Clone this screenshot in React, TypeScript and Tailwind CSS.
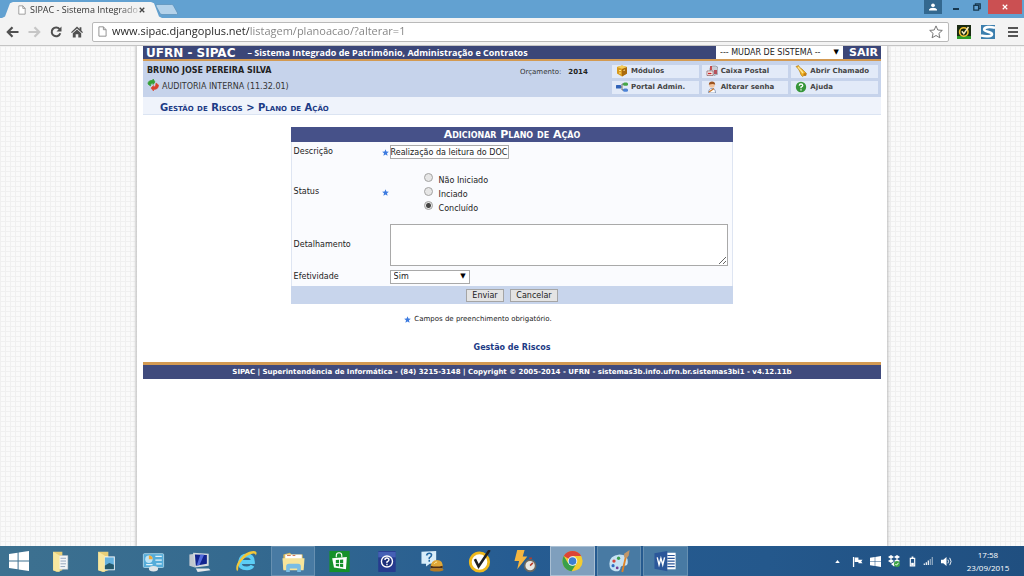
import type { ReactNode } from "react";

const VERDANA = "font-['DejaVu_Sans',sans-serif]";
const SEGOE = "font-['Open_Sans',sans-serif]";

function PageIcon({ className }: { className: string }) {
  return (
    <svg viewBox="0 0 10 12" className={className} fill="#fff" stroke="#8a8a8a" strokeWidth="1">
      <path d="M1 .8h5L9 4v7.2H1z" />
      <path d="M6 .8V4h3" fill="none" />
    </svg>
  );
}

function Star() {
  return (
    <svg viewBox="0 0 10 10" className="size-[7px] shrink-0" role="img" aria-label="obrigatório">
      <path d="M5 .3 6.3 3.5 9.8 3.8 7.1 6.1 8 9.6 5 7.7 2 9.6 2.9 6.1.2 3.8 3.7 3.5z" fill="#3d7be0" />
    </svg>
  );
}

function WindowsLogo({ className }: { className: string }) {
  return (
    <svg viewBox="0 0 20 20" className={className} fill="#fff">
      <path d="M0 3 8.6 1.8V9.5H0zM9.6 1.6 20 0v9.5H9.6zM0 10.5h8.6v7.7L0 17zM9.6 10.5H20V20L9.6 18.4z" />
    </svg>
  );
}

function ChromeBar() {
  return (
    <header className={`${SEGOE} shrink-0`}>
      <div className="flex h-[18px] items-end bg-[#62a1d1]">
        <div className="ml-[2px] flex h-4 w-[160px] items-center justify-between bg-[#f3f3f3] pl-4 pr-[17px] [clip-path:polygon(0_100%,3px_90%,8px_8%,11px_0,149px_0,152px_8%,157px_90%,100%_100%)]">
          <span className="flex items-center gap-1">
            <PageIcon className="h-[10px] w-2 shrink-0" />
            <span className="whitespace-nowrap text-[9px] leading-4 text-[#333] [mask-image:linear-gradient(90deg,#000_82%,rgb(0_0_0/0.25))]">
              SIPAC - Sistema Integrado
            </span>
          </span>
          <button aria-label="Fechar guia" className="shrink-0">
            <svg viewBox="0 0 8 8" className="size-[6px]" stroke="#444" strokeWidth="1.8">
              <path d="M1 1l6 6M7 1 1 7" />
            </svg>
          </button>
        </div>
        <button aria-label="Nova guia" className="-ml-[7px] mb-[3px]">
          <svg viewBox="0 0 24 11" className="h-[11px] w-6">
            <path d="M2 .5h14.500q1.500 0 2 1.200l4 7.300q.500 1.500-1 1.500H7q-1.500 0-2-1.200L1 2Q.500.500 2 .5z" fill="#b4d2ea" stroke="#5a8fb8" strokeWidth=".7" />
          </svg>
        </button>
        <div className="ml-auto flex h-full items-start">
          <button aria-label="Usuário" className="grid h-[14px] w-[18px] place-items-center bg-[#33688f]">
            <svg viewBox="0 0 10 10" className="size-2" fill="#fff">
              <circle cx="5" cy="2.8" r="2.3" />
              <path d="M0 9.5V8q1-2 5-2t5 2v1.5z" />
            </svg>
          </button>
          <button aria-label="Minimizar" className="grid h-[14px] w-7 place-items-center pt-1">
            <span className="h-[2px] w-[6px] bg-[#17384f]" />
          </button>
          <button aria-label="Restaurar" className="grid h-[14px] w-[14px] place-items-center">
            <svg viewBox="0 0 10 10" className="size-2" fill="none" stroke="#17384f" strokeWidth="1.6">
              <path d="M3 3V1h6v6H7M1 3h6v6H1z" />
            </svg>
          </button>
          <button aria-label="Fechar" className="ml-1 grid h-[14px] w-[34px] place-items-center bg-[#cb5052]">
            <svg viewBox="0 0 8 8" className="size-[6px]" stroke="#fff" strokeWidth="1.5">
              <path d="M1 1l6 6M7 1 1 7" />
            </svg>
          </button>
          <span className="w-[2px]" />
        </div>
      </div>
      <div className="flex h-7 items-center border-b border-[#c4c4c4] bg-[#f3f3f3] pl-[6px]">
        <div className="flex w-[86px] items-center gap-[9px]">
          <button aria-label="Voltar">
            <svg viewBox="0 0 13 12" className="h-3 w-[13px]" fill="none" stroke="#505050" strokeWidth="2.2">
              <path d="M12.5 6H2M6.5 1.2 1.8 6l4.7 4.8" />
            </svg>
          </button>
          <button aria-label="Avançar">
            <svg viewBox="0 0 13 12" className="h-3 w-[13px]" fill="none" stroke="#c6c6c6" strokeWidth="2.2">
              <path d="M.5 6H11M6.5 1.2 11.2 6l-4.7 4.8" />
            </svg>
          </button>
          <button aria-label="Recarregar">
            <svg viewBox="0 0 12 12" className="h-3 w-3">
              <path d="M9.6 3.2A4.4 4.4 0 1 0 10.300 7.300" fill="none" stroke="#505050" strokeWidth="2" />
              <path d="M11.500.500v5h-5z" fill="#505050" />
            </svg>
          </button>
          <button aria-label="Página inicial">
            <svg viewBox="0 0 12 12" className="h-3 w-3" fill="#505050">
              <path d="M6 .6 8.600 3V1.200h1.800v3.400L12 6.200l-.9.900L6 2.400.900 7.100 0 6.200z" />
              <path d="M1.800 7.300 6 3.500l4.200 3.800v4.200H7.300V8.200H4.700v3.300H1.800z" />
            </svg>
          </button>
        </div>
        <div className="flex h-5 min-w-0 flex-1 items-center gap-[5px] rounded-[2px] border border-[#b9b9b9] bg-white px-[5px]">
          <PageIcon className="h-[11px] w-[9px] shrink-0" />
          <input
            aria-label="Endereço"
            defaultValue="www.sipac.djangoplus.net/listagem/planoacao/?alterar=1"
            className="h-4 min-w-0 flex-1 bg-[linear-gradient(90deg,#222_137px,#808080_137px)] bg-clip-text text-[11px] text-transparent caret-black outline-none"
          />
          <button aria-label="Favoritos" className="shrink-0">
            <svg viewBox="0 0 14 14" className="size-[14px]" fill="#fff" stroke="#777">
              <path d="M7 .9 8.800 5l4.500.4-3.400 3 1 4.400L7 10.500l-3.900 2.300 1-4.400-3.400-3L5.200 5z" />
            </svg>
          </button>
        </div>
        <div className="flex items-center gap-[10px] pl-2 pr-[3px]">
          <button aria-label="Norton">
            <svg viewBox="0 0 14 14" className="size-[14px]">
              <path d="M0 0h14v14H0z" fill="#1a2a12" />
              <path d="M0 11h14v3H0z" fill="#2c9a28" />
              <circle cx="6.800" cy="7" r="4.200" fill="none" stroke="#f3c22e" strokeWidth="1.6" />
              <path d="m4.800 6.300 2 2.400L11.500 2" fill="none" stroke="#f7ecc0" strokeWidth="1.500" />
            </svg>
          </button>
          <button aria-label="Extensão S">
            <svg viewBox="0 0 14 14" className="size-[14px]">
              <path d="M0 0h14v14H0z" fill="#3c7fae" />
              <path d="M14 2.800C9 1.500 3 1.800 3.200 4.600c.3 2.400 7.800 1.800 7.800 4.600 0 2.300-6 2.600-11 1.300" fill="none" stroke="#fff" strokeWidth="2.600" />
            </svg>
          </button>
          <button aria-label="Menu" className="mx-[3px]">
            <svg viewBox="0 0 10 10" className="size-[10px]" fill="#555">
              <path d="M0 0h10v2H0zM0 4h10v2H0zM0 8h10v2H0z" />
            </svg>
          </button>
        </div>
      </div>
    </header>
  );
}

const menu: { label: string; icon: ReactNode }[] = [
  {
    label: "Módulos",
    icon: (
      <>
        <path d="M1 2 6 .6 11 2v6.500L6 11.500 1 8.500z" fill="#d89a1d" />
        <path d="M6 4 11 2v6.500l-5 3z" fill="#a96a0d" />
        <path d="M1 2 6 .6 11 2 6 3.800z" fill="#f4cd5a" />
        <path d="M3 5.500h2M3 8h2M7.500 5.500 9 5" stroke="#ffe48a" />
      </>
    ),
  },
  {
    label: "Caixa Postal",
    icon: (
      <>
        <path d="M4 6V3.500Q4 1 7 1h2.500Q12 1.200 12 4v5l-4 1.500z" fill="#c8cdd4" stroke="#7a828c" strokeWidth=".6" />
        <path d="M1 6h6v4.500H1z" fill="#fff" stroke="#8a5a5a" strokeWidth=".7" />
        <path d="M2 8.500h3.500M5 1v4" stroke="#cc2a2a" strokeWidth="1.500" />
        <path d="M8 5h3v4H8z" fill="#b5525c" />
      </>
    ),
  },
  {
    label: "Abrir Chamado",
    icon: (
      <>
        <path d="M1 1.500 3.500.5q1 2.500 3.500 3.500l4.500 4.500-4 3Q5.500 10 5 7 4 4 1 1.500z" fill="#f0b325" stroke="#a8720c" strokeWidth=".6" />
        <path d="m3 2 5 6" stroke="#ffe795" strokeWidth="1.300" />
        <circle cx="10" cy="9.500" r="1.500" fill="#c47b10" />
      </>
    ),
  },
  {
    label: "Portal Admin.",
    icon: (
      <>
        <path d="M4 6h2V3h2M6 6v3h2" fill="none" stroke="#555" strokeWidth=".8" />
        <rect x="0" y="4" width="5" height="3.500" rx=".5" fill="#2f62b8" />
        <rect x="7" y="1.500" width="5" height="3.300" rx="1.500" fill="#45a648" />
        <rect x="7" y="7.500" width="5" height="3.300" rx="1.500" fill="#4d83d6" />
      </>
    ),
  },
  {
    label: "Alterar senha",
    icon: (
      <>
        <path d="M2.500 12q0-4.500 3.500-4.500T9.500 12z" fill="#fff" stroke="#6b7fa8" strokeWidth=".7" />
        <circle cx="6" cy="4" r="2.800" fill="#f3c299" />
        <path d="M2.800 3.800Q3 .5 6 .5t3.200 3.300Q7 2 2.800 3.800z" fill="#9b5420" />
        <path d="m3 11 5-3.500" stroke="#cc7426" strokeWidth="1.200" />
      </>
    ),
  },
  {
    label: "Ajuda",
    icon: (
      <>
        <circle cx="6" cy="6" r="5.200" fill="#36963a" />
        <path d="M4.200 4.600Q4.400 3 6 3t1.800 1.500Q7.800 5.500 6 6.200v1.100M6 8.200v1.300" fill="none" stroke="#fff" strokeWidth="1.300" />
      </>
    ),
  },
];

function SystemHeader() {
  return (
    <div>
      <div className="flex h-[15px] items-center border-b-2 border-[#d39a52] bg-[#3b4678] text-white">
        <strong className="pl-[3px] text-[12px] leading-3">UFRN - SIPAC</strong>
        <span className="ml-3 font-['Open_Sans',sans-serif] text-[9px] font-bold leading-3">
          – Sistema Integrado de Patrimônio, Administração e Contratos
        </span>
        <div className="relative ml-auto h-[13px] w-[127px]">
          <select
            aria-label="Mudar de sistema"
            className="block h-full w-full appearance-none bg-white pl-1 text-[8px] leading-3 text-[#222]"
          >
            <option>--- MUDAR DE SISTEMA --</option>
          </select>
          <span className="pointer-events-none absolute right-1 top-0 text-[7px] leading-3 text-black">▼</span>
        </div>
        <a href="#sair" className="w-[38px] pl-[6px] text-[11px] font-bold leading-3">
          SAIR
        </a>
      </div>
      <div className="flex h-9 bg-[#c6d3eb] text-[8px] text-[#333]">
        <div className="flex-1 pl-1">
          <div className="pt-1 font-bold leading-3 text-[#222]">BRUNO JOSE PEREIRA SILVA</div>
          <div className="flex items-center gap-[3px] pt-[2px] leading-4">
            <svg viewBox="0 0 12 12" className="mb-1 size-3">
              <path d="M1 5q0-4 5-3.500V0l2 3-2 2.500V4Q3.500 3.500 3.500 7z" fill="#35a035" stroke="#35a035" strokeWidth=".8" />
              <path d="M11.500 6q0 4.500-5 4.500V12l-2.500-3L6.500 6.500V8Q9 8 9 4z" fill="#d9412e" stroke="#d9412e" strokeWidth=".6" />
            </svg>
            AUDITORIA INTERNA (11.32.01)
          </div>
        </div>
        <div className="flex w-[92px] items-start gap-[7px] pt-[5px] text-[7px] leading-3">
          <span>Orçamento:</span>
          <strong className="text-[#222]">2014</strong>
        </div>
        <nav className="grid w-[269px] grid-cols-3 content-center gap-[3px] pr-[3px]">
          {menu.map((item) => (
            <a
              key={item.label}
              href="#menu"
              className="flex h-[13px] items-center gap-[3px] whitespace-nowrap bg-[#e2eaf8] pl-1 text-[7px] font-bold leading-3 text-[#444]"
            >
              <svg viewBox="0 0 12 12" className="size-3 shrink-0">
                {item.icon}
              </svg>
              {item.label}
            </a>
          ))}
        </nav>
      </div>
      <h2 className="h-[18px] border-b border-[#dbe4f2] bg-[#eff3fb] pl-[17px] text-[10px] font-bold leading-[22px] text-[#1c3a85] [font-variant:small-caps]">
        Gestão de Riscos &gt; Plano de Ação
      </h2>
    </div>
  );
}

function PlanForm() {
  return (
    <form
      className="mx-auto mt-3 w-3/5 border-x border-[#dee5f2] bg-[#fafbfe] text-[8px] text-[#222]"
      onSubmit={(e) => e.preventDefault()}
    >
      <h1 className="-mx-px bg-[#465189] text-center text-[11px] font-bold leading-[15px] text-white [font-variant:small-caps]">
        Adicionar Plano de Ação
      </h1>
      <div className="grid grid-cols-[88px_8px_1fr] items-center pl-[2px] pr-1">
        <label htmlFor="descricao">Descrição</label>
        <Star />
        <div className="flex h-5 items-center">
          <input
            id="descricao"
            defaultValue="Realização da leitura do DOC"
            className="h-[14px] w-[119px] border border-[#a9a9a9] bg-white text-[8px] outline-none"
          />
        </div>

        <span id="status">Status</span>
        <Star />
        <div role="radiogroup" aria-labelledby="status" className="mb-[6px] mt-3 pl-[34px]">
          {["Não Iniciado", "Inciado", "Concluído"].map((s) => (
            <label key={s} className="flex h-[14px] items-center gap-[6px]">
              <input
                type="radio"
                name="status"
                defaultChecked={s === "Concluído"}
                className="mb-[7px] size-[9px] shrink-0 appearance-none rounded-full border border-[#a3a3a3] bg-[#e6e6e6] checked:bg-[radial-gradient(circle,#444_2px,#e6e6e6_3px)]"
              />
              {s}
            </label>
          ))}
        </div>

        <label htmlFor="detalhamento" className="col-span-2">
          Detalhamento
        </label>
        <textarea
          id="detalhamento"
          className="my-[2px] block h-[42px] w-full resize border border-[#a9a9a9] bg-white text-[8px] outline-none"
        />

        <label htmlFor="efetividade" className="col-span-2">
          Efetividade
        </label>
        <div className="relative my-[2px] h-[14px] w-20">
          <select
            id="efetividade"
            className="block h-full w-full appearance-none border border-[#a9a9a9] bg-white pl-[3px] text-[8px] leading-3"
          >
            <option>Sim</option>
            <option>Não</option>
          </select>
          <span className="pointer-events-none absolute right-1 top-0 text-[7px] leading-3 text-black">▼</span>
        </div>
      </div>
      <div className="-mx-px flex h-[18px] items-center justify-center gap-[6px] bg-[#c8d5ec]">
        <button type="submit" className="h-[13px] w-[38px] border border-[#a5a5a5] bg-[#e4e4e4] leading-[11px]">
          Enviar
        </button>
        <button type="button" className="h-[13px] w-12 border border-[#a5a5a5] bg-[#e4e4e4] leading-[11px]">
          Cancelar
        </button>
      </div>
    </form>
  );
}

const taskIcons: { name: string; state?: "open" | "active"; art: ReactNode }[] = [
  {
    name: "Documentos",
    art: (
      <>
        <path d="M4 2h10v20l-6 2-4-2z" fill="#e8cf78" />
        <path d="M9 6h11v15H9z" fill="#f3f5f7" stroke="#b9bec4" strokeWidth=".5" />
        <path d="M12 9h6M12 12h6M12 15h6M12 18h5" stroke="#8fa1bb" />
        <path d="m4 2 7 4v18l-7-2z" fill="#f7e7a0" />
      </>
    ),
  },
  {
    name: "Imagens",
    art: (
      <>
        <path d="M3 2h11v20l-6 2-5-2z" fill="#e8cf78" />
        <path d="M9 7h12v15H9z" fill="#fff" />
        <path d="M10 8h10v13H10z" fill="#64b1de" />
        <path d="m10 17 5-3 5 2v5H10z" fill="#24586b" />
        <path d="m3 2 7 4v18l-7-2z" fill="#f7e7a0" />
      </>
    ),
  },
  {
    name: "Painel de controle",
    art: (
      <>
        <rect x="1" y="4" width="22" height="15" rx="1" fill="#55acd9" stroke="#c0e5f6" strokeWidth=".8" />
        <circle cx="7" cy="10" r="4" fill="#bfe4f5" />
        <path d="M7 10V6a4 4 0 0 1 4 4z" fill="#f2aa38" />
        <path d="M14 7h7M14 11h7M4 16h7M15 15h6" stroke="#e3f4fb" strokeWidth="1.400" />
        <ellipse cx="12" cy="20.500" rx="5" ry="3" fill="#dfe5e8" />
      </>
    ),
  },
  {
    name: "Computador",
    art: (
      <>
        <path d="m1 5 6-1v15l-6-2z" fill="#c2c9d0" />
        <path d="M5 3 22 4v13L7 19z" fill="#d4dade" />
        <path d="m7 5 13 .5v9.500L8 17z" fill="#12248f" />
        <path d="m13 5 4 .2-5 11-3 .500z" fill="#526bdd" />
        <path d="M8 20h14l2 2-14 2z" fill="#e6e9eb" />
      </>
    ),
  },
  {
    name: "Internet Explorer",
    art: (
      <>
        <path d="M5 13h14Q19 6 12.500 6T5 13t7.500 7q4.500 0 6-3" fill="none" stroke="#5ccdf5" strokeWidth="4.200" />
        <path d="M2 23C-2 19 5 6 15 2q7-2 8 1 0 2-1 3 0-3-4-2C10 6 2 16 3 21z" fill="#f4c738" />
      </>
    ),
  },
  {
    name: "Explorador de Arquivos",
    state: "open",
    art: (
      <>
        <path d="M1 5 8 3l2 2h12v16H1z" fill="#ddb95b" />
        <path d="M3 5h18v5H3z" fill="#fff" />
        <path d="M5 6h4M11 6h3" stroke="#cf6b42" />
        <path d="M0 9h24l-1 13H1z" fill="#f7e49a" />
        <path d="M4 24v-6q0-3 3-3h10q3 0 3 3v6h-4v-4H8v4z" fill="#79bde5" />
      </>
    ),
  },
  {
    name: "Loja",
    art: (
      <>
        <path d="M1 1h22v23H1z" fill="#159129" />
        <path d="m4 9 16-1.500-1 13.500-13-2z" fill="#fff" />
        <path d="M8.500 8V6q0-3 3-3t3 3v2" fill="none" stroke="#fff" strokeWidth="1.200" />
        <path d="m8 11 3.500-.3v3.300H8zM12.500 10.600 16 10.300V14h-3.500zM8 15h3.500v3L8 17.500zM12.500 15H16v3.700l-3.500-.5z" fill="#159129" />
      </>
    ),
  },
  {
    name: "Ajuda",
    art: (
      <>
        <rect x="3" y="1" width="19" height="23" rx="1" fill="#263b8f" />
        <path d="M3 2h19v6H3z" fill="#4560b5" />
        <circle cx="12.500" cy="12.500" r="6" fill="#1c2e7a" stroke="#fff" strokeWidth="1.500" />
        <path d="M10.300 11q0-2.300 2.200-2.300t2.200 2q0 1.300-2.200 2.300v1M12.500 15v1.500" fill="none" stroke="#fff" strokeWidth="1.500" />
      </>
    ),
  },
  {
    name: "Suporte",
    art: (
      <>
        <path d="M0 2 16 1v13l-7 1-4 3v-3H0z" fill="#d9eefa" />
        <path d="M5.500 6q.5-2.500 3-2.500t2.500 2Q11 7 8.500 8.500V10M8.500 11v1.800" fill="none" stroke="#2267a2" strokeWidth="1.700" />
        <path d="M10 20q0-9 7-9t6 9z" fill="#e0a838" />
        <path d="M10 17q6 2 13 0v2.500H10z" fill="#4c2d16" />
        <ellipse cx="16.500" cy="21.500" rx="7.500" ry="2" fill="#b67c24" />
        <path d="M14 15q1-2 3-2" stroke="#fff0a7" fill="none" />
      </>
    ),
  },
  {
    name: "Norton",
    art: (
      <>
        <circle cx="12" cy="13" r="10" fill="#fff" stroke="#efb91b" strokeWidth="3" />
        <path d="m7 10 4 8L23 0" fill="none" stroke="#202020" strokeWidth="2.800" />
      </>
    ),
  },
  {
    name: "Desempenho",
    art: (
      <>
        <path d="M3 0h8L9 7h5L3 21l2-9H0z" fill="#f5b640" />
        <circle cx="17" cy="17" r="6" fill="#e8e8e3" stroke="#6c675e" strokeWidth="1.800" />
        <path d="m17 17 3-3M16 9h3" stroke="#ba3d29" strokeWidth="1.600" />
      </>
    ),
  },
  {
    name: "Google Chrome",
    state: "active",
    art: (
      <>
        <circle cx="12" cy="12" r="11" fill="#f3cc31" />
        <path d="M12 12 2.500 6.500A11 11 0 0 1 21.500 6.500H12z" fill="#dc4437" />
        <path d="M2.500 6.500A11 11 0 0 0 11 23l5.500-8.500L12 12l-5 2z" fill="#3a9f49" />
        <circle cx="12" cy="12" r="5.200" fill="#fff" />
        <circle cx="12" cy="12" r="4.200" fill="#3d7fd1" />
      </>
    ),
  },
  {
    name: "Paint",
    state: "open",
    art: (
      <>
        <path d="M1 15Q1 6 12 5q9 0 9 8 0 5-5 4-3 0-3 3-1 4-6 3-6-1-6-8z" fill="#c5e2f3" />
        <circle cx="6" cy="12" r="1.800" fill="#d7453b" />
        <circle cx="11" cy="9" r="1.800" fill="#3c9e4d" />
        <circle cx="5" cy="17" r="1.700" fill="#306bc0" />
        <circle cx="9.500" cy="19.500" r="1.500" fill="#713e97" />
        <path d="m15 24 4-17" stroke="#df8427" strokeWidth="2" />
        <path d="m17 8 0-4 6-4-1 6-2 3z" fill="#c29768" />
      </>
    ),
  },
  {
    name: "Word",
    state: "open",
    art: (
      <>
        <path d="M12 3h11v18H12z" fill="#fff" />
        <path d="M14 6h8M14 9h8M14 12h8M14 15h8M14 18h8" stroke="#2b579a" strokeWidth="1.300" />
        <path d="M0 3.500 14 1v22L0 20.500z" fill="#2b579a" />
        <path d="m3 8 2 8 2-7 2 7 2-8" fill="none" stroke="#fff" strokeWidth="1.500" />
      </>
    ),
  },
];

function Taskbar() {
  return (
    <footer
      className={`${SEGOE} flex h-[30px] shrink-0 items-center bg-[linear-gradient(90deg,#3d7190_0%,#34698f_25%,#265c92_50%,#24588c_75%,#204f80_100%)] text-white`}
    >
      <button aria-label="Iniciar" className="grid w-[37px] shrink-0 place-items-center">
        <WindowsLogo className="size-5" />
      </button>
      <div className="grid h-full w-[652px] shrink-0 grid-cols-[repeat(14,1fr)]">
        {taskIcons.map((t) => (
          <button
            key={t.name}
            aria-label={t.name}
            className={
              t.state === "active"
                ? "mx-px grid place-items-center border border-[#a9bfd3] bg-[#7f9fbd]"
                : t.state === "open"
                  ? "mx-px grid place-items-center border border-[#6790b1] bg-[#487aa3]"
                  : "mx-px grid place-items-center"
            }
          >
            <svg viewBox="0 0 24 25" className="size-[23px]">
              {t.art}
            </svg>
          </button>
        ))}
      </div>
      <div className="ml-auto flex items-center gap-[7px]">
        <svg viewBox="0 0 6 4" className="mr-[5px] h-[3px] w-[5px]" fill="#fff">
          <path d="M3 0 6 4H0z" />
        </svg>
        <svg viewBox="0 0 12 12" className="size-[11px]" fill="#fff">
          <path d="M1 1h1.400v11H1zM3 1.500h4V4h4.500L10 6l1.500 2H7V6.500H3z" />
        </svg>
        <WindowsLogo className="size-[11px]" />
        <svg viewBox="0 0 12 12" className="size-3">
          <path d="m3 0 3 2-3 2-3-2zM9 0l3 2-3 2-3-2zM3 4l3 2-3 2-3-2zM9 4l3 2-3 2-3-2zM6 7l3 2-3 2.500L3 9z" fill="#fff" />
          <circle cx="9" cy="9" r="3" fill="#3fa447" />
          <path d="m7.500 9 1 1.200 2-2.400" fill="none" stroke="#fff" />
        </svg>
        <svg viewBox="0 0 8 12" className="ml-[2px] h-[11px] w-[7px]" fill="none" stroke="#fff" strokeWidth="1.300">
          <path d="M3 1h2M1.500 2.500h5v8.500h-5z" />
          <path d="M2.500 9h3" strokeWidth="3" />
        </svg>
        <svg viewBox="0 0 12 10" className="h-2 w-[11px]" fill="#fff">
          <path d="M0 8h1.500v2H0zM2.500 6.500H4V10H2.500zM5 4.500h1.500V10H5z" />
          <path d="M7.500 2.500H9V10H7.500zM10 0h1.500v10H10z" opacity=".5" />
        </svg>
        <svg viewBox="0 0 12 12" className="size-[11px]" fill="none" stroke="#fff">
          <path d="M0 4h2.500L6 1v10L2.500 8H0z" fill="#fff" stroke="none" />
          <path d="M7.500 4q1.500 2 0 4M9.500 2q3 4 0 8" />
        </svg>
      </div>
      <div className="w-[72px] text-center text-[8px] leading-[13px]">
        <div>17:58</div>
        <div>23/09/2015</div>
      </div>
    </footer>
  );
}

export default function App() {
  return (
    <div className="flex h-screen flex-col overflow-hidden">
      <ChromeBar />
      <main
        className={`${VERDANA} flex min-h-0 flex-1 justify-center overflow-hidden bg-[#fafafa] bg-[linear-gradient(#f0f0f0_1px,transparent_1px),linear-gradient(90deg,#f0f0f0_1px,transparent_1px)] bg-[size:5px_5px]`}
      >
        <div className="w-full max-w-[750px] bg-white px-[6px] shadow-[0_0_3px_1px_#bbb]">
          <SystemHeader />
          <PlanForm />
          <div className="mt-[9px] flex items-center justify-center gap-[3px] pr-[68px] text-[7px] leading-3 text-[#222]">
            <Star />
            Campos de preenchimento obrigatório.
          </div>
          <div className="mt-[17px] text-center text-[8px] font-bold leading-3 text-[#1c3a85]">
            <a href="#riscos">Gestão de Riscos</a>
          </div>
          <div className="mt-2 border-t-[3px] border-[#d39a52] bg-[#404b7d] text-center text-[7px] font-semibold leading-[14px] text-white">
            SIPAC | Superintendência de Informática - (84) 3215-3148 | Copyright © 2005-2014 - UFRN -
            sistemas3b.info.ufrn.br.sistemas3bi1 - v4.12.11b
          </div>
        </div>
      </main>
      <Taskbar />
    </div>
  );
}
